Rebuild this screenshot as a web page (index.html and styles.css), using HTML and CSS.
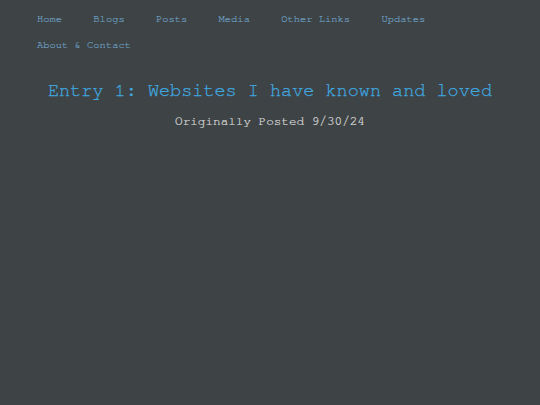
FILE: index.html
```html
<!DOCTYPE html>
<html>
<head>
<meta charset="utf-8">
<link rel="stylesheet" href="styles.css">
</head>
<body>
<nav class="nav">
  <a href="#" class="nav-link">Home</a>
  <a href="#" class="nav-link">Blogs</a>
  <a href="#" class="nav-link">Posts</a>
  <a href="#" class="nav-link">Media</a>
  <a href="#" class="nav-link">Other Links</a>
  <a href="#" class="nav-link">Updates</a>
  <a href="#" class="nav-link">About &amp; Contact</a>
</nav>
<main class="entry">
  <h1 class="entry-title">Entry 1: Websites I have known and loved</h1>
  <p class="entry-date">Originally Posted 9/30/24</p>
</main>
</body>
</html>
```
FILE: styles.css
```css
html, body {
  margin: 0;
  padding: 0;
  background: #3e4345;
}
body {
  font-family: "Nimbus Mono PS", "Nimbus Mono L", "FreeMono", "Courier", "Liberation Mono", monospace;
  min-height: 405px;
}
.nav {
  display: flex;
  flex-wrap: wrap;
  column-gap: 31.3px;
  padding: 5.8px 37px 0 37px;
  font-size: 10.45px;
  line-height: 26px;
}
.nav-link {
  color: #6b9cbf;
  text-decoration: none;
  white-space: nowrap;
  -webkit-text-stroke: 0.2px #6b9cbf;
}
.entry {
  text-align: center;
}
.entry-title {
  margin: 23.3px 0 0 0;
  font-size: 18.5px;
  font-weight: normal;
  line-height: normal;
  color: #3fa9e0;
  -webkit-text-stroke: 0.25px #3fa9e0;
}
.entry-date {
  margin: 14.5px 0 0 0;
  font-size: 12.67px;
  line-height: normal;
  color: #e0e0e0;
  -webkit-text-stroke: 0.15px #e0e0e0;
}
```
